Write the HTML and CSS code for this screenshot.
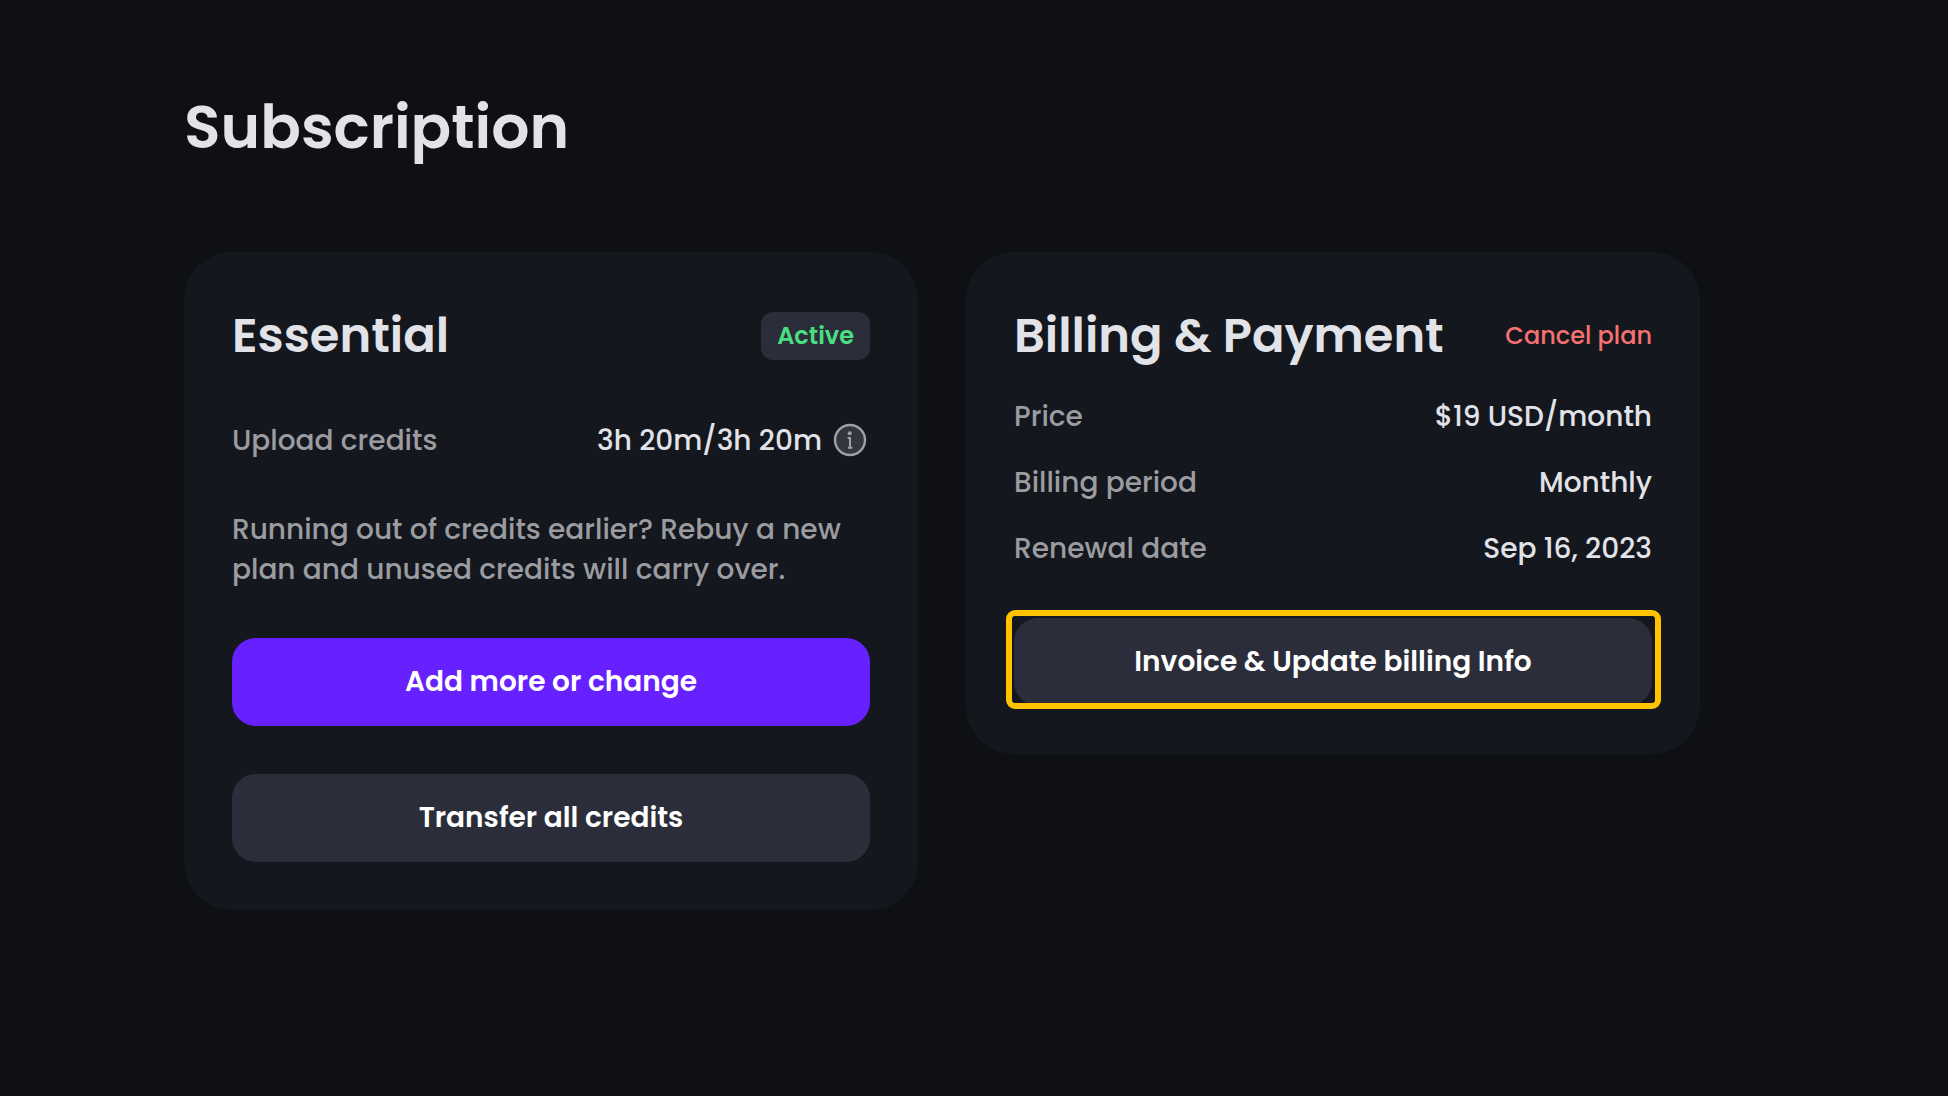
FILE: index.html
```html
<!DOCTYPE html>
<html lang="en">
<head>
<meta charset="utf-8">
<meta name="viewport" content="width=device-width, initial-scale=1">
<title>Subscription</title>
<link rel="stylesheet" href="styles.css">
</head>
<body>
<main class="page">
  <h1 class="page-title">Subscription</h1>
  <div class="cards">
    <section class="card card-plan">
      <header class="card-header">
        <h2 class="card-title">Essential</h2>
        <span class="badge">Active</span>
      </header>
      <dl class="details">
        <div class="detail">
          <dt>Upload credits</dt>
          <dd class="credits">
            3h 20m/3h 20m
            <button class="info" type="button" aria-label="About upload credits">
              <svg viewBox="0 1 40 40" aria-hidden="true">
                <circle cx="20" cy="20" r="15" fill="#33363c" stroke="#a0a1a4" stroke-width="2.400"/>
                <circle cx="19.700" cy="13.200" r="2" fill="#a0a1a4"/>
                <path d="M17.600 18h2.400v9.600M18 27.800h4.400" fill="none" stroke="#a0a1a4" stroke-width="2"/>
              </svg>
            </button>
          </dd>
        </div>
      </dl>
      <p class="note">Running out of credits earlier? Rebuy a new plan and unused credits will carry over.</p>
      <button class="button button-primary" type="button">Add more or change</button>
      <button class="button" type="button">Transfer all credits</button>
    </section>
    <section class="card card-billing">
      <header class="card-header">
        <h2 class="card-title">Billing &amp; Payment</h2>
        <a class="cancel" href="#cancel">Cancel plan</a>
      </header>
      <dl class="details">
        <div class="detail"><dt>Price</dt><dd>$19 USD/month</dd></div>
        <div class="detail"><dt>Billing period</dt><dd>Monthly</dd></div>
        <div class="detail"><dt>Renewal date</dt><dd>Sep 16, 2023</dd></div>
      </dl>
      <div class="highlight">
        <button class="button" type="button">Invoice &amp; Update billing Info</button>
      </div>
    </section>
  </div>
</main>
</body>
</html>
```
FILE: styles.css
```css
* {
  box-sizing: border-box;
}

body {
  margin: 0;
  background: #0f1014;
  color: #e2e3e8;
  font-family: Poppins, Inter, "Noto Sans", sans-serif;
  font-size: 28px;
  font-weight: 500;
  line-height: 42px;
}

h1, h2, p, dl, dd {
  margin: 0;
}

.page {
  padding: 82px 248px 82px 184px;
}

.page-title {
  margin-bottom: 80px;
  font-size: 60px;
  font-weight: 600;
  line-height: 90px;
}

.cards {
  display: grid;
  grid-template-columns: 1fr 1fr;
  align-items: start;
  gap: 48px;
}

.card {
  display: flex;
  flex-direction: column;
  gap: 48px;
  padding: 48px;
  border-radius: 48px;
  background: #14171e;
}

.card-header,
.detail {
  display: flex;
  align-items: center;
  justify-content: space-between;
}

.card-billing .card-header {
  margin-bottom: -24px;
}

.card-title {
  font-size: 48px;
  font-weight: 600;
  line-height: 72px;
}

.badge {
  padding: 6px 16px;
  border-radius: 12px;
  background: #2b2e3a;
  color: #4ade80;
  font-size: 24px;
  font-weight: 600;
  line-height: 36px;
}

.cancel {
  color: #f87171;
  font-size: 24px;
  line-height: 36px;
  text-decoration: none;
}

.details {
  display: flex;
  flex-direction: column;
  gap: 24px;
}

.detail dt,
.note {
  color: #9b9ca0;
}

.credits {
  display: flex;
  align-items: center;
  gap: 8px;
}

.info {
  width: 40px;
  height: 40px;
  padding: 0;
  border: 0;
  background: none;
}

.info svg {
  display: block;
}

.note {
  line-height: 40px;
}

.button {
  width: 100%;
  padding: 23px 24px;
  border: 0;
  border-radius: 24px;
  background: #2b2e3a;
  color: #ffffff;
  font: inherit;
  font-weight: 600;
}

.button-primary {
  background: #6721ff;
}

.highlight {
  position: relative;
}

.highlight::after {
  content: "";
  position: absolute;
  inset: -8px -9px -3px -8px;
  border: 6px solid #ffc300;
  border-radius: 9px;
  pointer-events: none;
}
```
